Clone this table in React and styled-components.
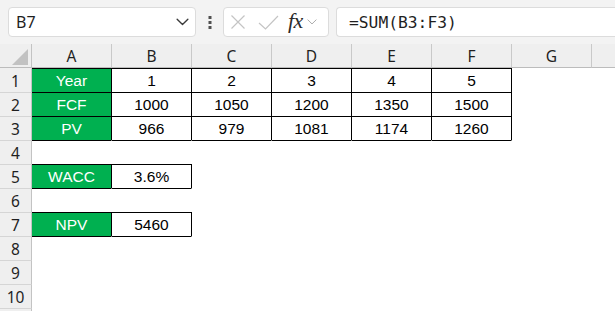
import React from "react";
import styled, { createGlobalStyle } from "styled-components";

const GlobalStyle = createGlobalStyle`
  html, body {
    margin: 0;
    padding: 0;
    background: #ffffff;
    font-family: "Noto Sans", "Liberation Sans", sans-serif;
    overflow: hidden;
  }
`;

const Page = styled.div`
  width: 615px;
  height: 311px;
  overflow: hidden;
  display: flex;
  flex-direction: column;
`;

/* ---------- formula bar ---------- */

const Toolbar = styled.div`
  height: 44px;
  flex: none;
  background: #f3f3f3;
  display: flex;
  align-items: flex-start;
  padding: 7px 0 0 8px;
  box-sizing: border-box;
  overflow: hidden;
`;

const Field = styled.div`
  height: 30px;
  box-sizing: border-box;
  background: #ffffff;
  border: 1px solid #dcdcdc;
  border-radius: 4px;
  display: flex;
  align-items: center;
  flex: none;
`;

const NameBox = styled(Field)`
  width: 188px;
  padding: 0 6px 0 7px;
  justify-content: space-between;
  font-size: 16px;
  color: #1f1f1f;
`;

const Grip = styled.div`
  width: 27px;
  height: 30px;
  flex: none;
  display: flex;
  align-items: center;
  justify-content: center;
`;

const FxBox = styled(Field)`
  width: 106px;
  padding: 0 5px 0 5px;
`;

const FxLabel = styled.span`
  font-family: "Liberation Serif", "DejaVu Serif", serif;
  font-style: italic;
  font-size: 22px;
  color: #2b2b2b;
  margin: -3px 4px 0 9px;
  letter-spacing: -0.5px;
`;

const FormulaInput = styled(Field)`
  margin-left: 7px;
  width: 300px;
  padding-left: 12px;
  font-family: "DejaVu Sans Mono", "Liberation Mono", monospace;
  font-size: 16.3px;
  color: #1f1f1f;
  border-right: none;
  border-radius: 4px 0 0 4px;
`;

/* ---------- sheet ---------- */

const Sheet = styled.div`
  display: grid;
  grid-template-columns: 32px repeat(8, 80px);
  grid-auto-rows: 24px;
  flex: 1;
  overflow: hidden;
`;

const Corner = styled.div`
  background: #efefef;
  border-right: 1px solid #c3c3c3;
  border-bottom: 1px solid #bcbcbc;
  box-sizing: border-box;
  display: flex;
  align-items: flex-end;
  justify-content: flex-end;
  padding: 0 3px 2px 0;
`;

const ColHead = styled.div`
  background: #efefef;
  border-right: 1px solid #c9c9c9;
  border-bottom: 1px solid #bcbcbc;
  box-sizing: border-box;
  display: flex;
  align-items: center;
  justify-content: center;
  font-size: 15.5px;
  color: #1f1f1f;
  padding-top: 1px;
`;

const RowHead = styled.div`
  background: #efefef;
  border-right: 1px solid #c3c3c3;
  border-top: 1px solid ${(p) => (p.$first ? "transparent" : "#d5d5d5")};
  box-sizing: border-box;
  display: flex;
  align-items: center;
  justify-content: center;
  font-size: 15.5px;
  color: #1f1f1f;
`;

const Cell = styled.div`
  box-sizing: border-box;
  border-top: 1px solid ${(p) => (p.$topLine ? "#000000" : "transparent")};
  border-right: 1px solid ${(p) => (p.$boxed ? "#000000" : "transparent")};
  background: ${(p) => (p.$fill ? "#00b050" : "#ffffff")};
  color: ${(p) => (p.$fill ? "#ffffff" : "#000000")};
  font-family: "Liberation Sans", Arial, sans-serif;
  font-size: 15.5px;
  display: flex;
  align-items: center;
  justify-content: center;
  white-space: nowrap;
`;

/* ---------- icons ---------- */

const Chevron = ({ size = 13, color = "#3a3a3a", width = 1.4 }) => (
  <svg width={size} height={size * 0.6} viewBox="0 0 13 8" fill="none">
    <path d="M1 1.2 L6.5 6.6 L12 1.2" stroke={color} strokeWidth={width} strokeLinecap="round" strokeLinejoin="round" />
  </svg>
);

const Dots = () => (
  <svg width="4" height="13" viewBox="0 0 4 13">
    <rect x="0.5" y="0" width="3" height="3" fill="#505050" />
    <rect x="0.5" y="5" width="3" height="3" fill="#505050" />
    <rect x="0.5" y="10" width="3" height="3" fill="#505050" />
  </svg>
);

const CrossIcon = () => (
  <svg width="16" height="16" viewBox="0 0 16 16" fill="none">
    <path d="M1.5 1.5 L14.5 14.5 M14.5 1.5 L1.5 14.5" stroke="#c4c4c4" strokeWidth="1.2" />
  </svg>
);

const CheckIcon = () => (
  <svg width="21" height="15" viewBox="0 0 21 15" fill="none">
    <path d="M1 8 L7.5 14 L20 1" stroke="#c4c4c4" strokeWidth="1.2" />
  </svg>
);

const IconSlot = styled.span`
  display: flex;
  align-items: center;
  margin-left: ${(p) => p.$gap || 0}px;
`;

const SelectAll = () => (
  <svg width="16" height="16" viewBox="0 0 16 16">
    <polygon points="0,16 16,16 16,0" fill="#c2c2c2" />
  </svg>
);

/* ---------- data ---------- */

// the last column is only partly in view, so its letter is not drawn
const columns = ["A", "B", "C", "D", "E", "F", "G", ""];

const rows = [
  ["Year", 1, 2, 3, 4, 5],
  ["FCF", 1000, 1050, 1200, 1350, 1500],
  ["PV", 966, 979, 1081, 1174, 1260],
  [],
  ["WACC", "3.6%"],
  [],
  ["NPV", 5460],
  [],
  [],
  [],
];

const isBoxed = (r, c) => r >= 0 && r < rows.length && c < rows[r].length;

export default function App() {
  return (
    <Page>
      <GlobalStyle />
      <Toolbar>
        <NameBox>
          <span>B7</span>
          <Chevron />
        </NameBox>
        <Grip>
          <Dots />
        </Grip>
        <FxBox>
          <IconSlot $gap={1}>
            <CrossIcon />
          </IconSlot>
          <IconSlot $gap={12}>
            <CheckIcon />
          </IconSlot>
          <FxLabel>fx</FxLabel>
          <Chevron size={10} color="#9a9a9a" width={1.1} />
        </FxBox>
        <FormulaInput>=SUM(B3:F3)</FormulaInput>
      </Toolbar>

      <Sheet>
        <Corner>
          <SelectAll />
        </Corner>
        {columns.map((c, i) => (
          <ColHead key={i}>{c}</ColHead>
        ))}

        {rows.map((row, r) => (
          <React.Fragment key={r}>
            <RowHead $first={r === 0}>{r + 1}</RowHead>
            {columns.map((_, c) => {
              const boxed = isBoxed(r, c);
              const topLine = boxed || isBoxed(r - 1, c);
              return (
                <Cell
                  key={c}
                  $boxed={boxed}
                  $topLine={topLine}
                  $fill={boxed && c === 0}
                >
                  {boxed ? row[c] : ""}
                </Cell>
              );
            })}
          </React.Fragment>
        ))}

        {/* the next row, only its top edge in view */}
        <RowHead />
      </Sheet>
    </Page>
  );
}
